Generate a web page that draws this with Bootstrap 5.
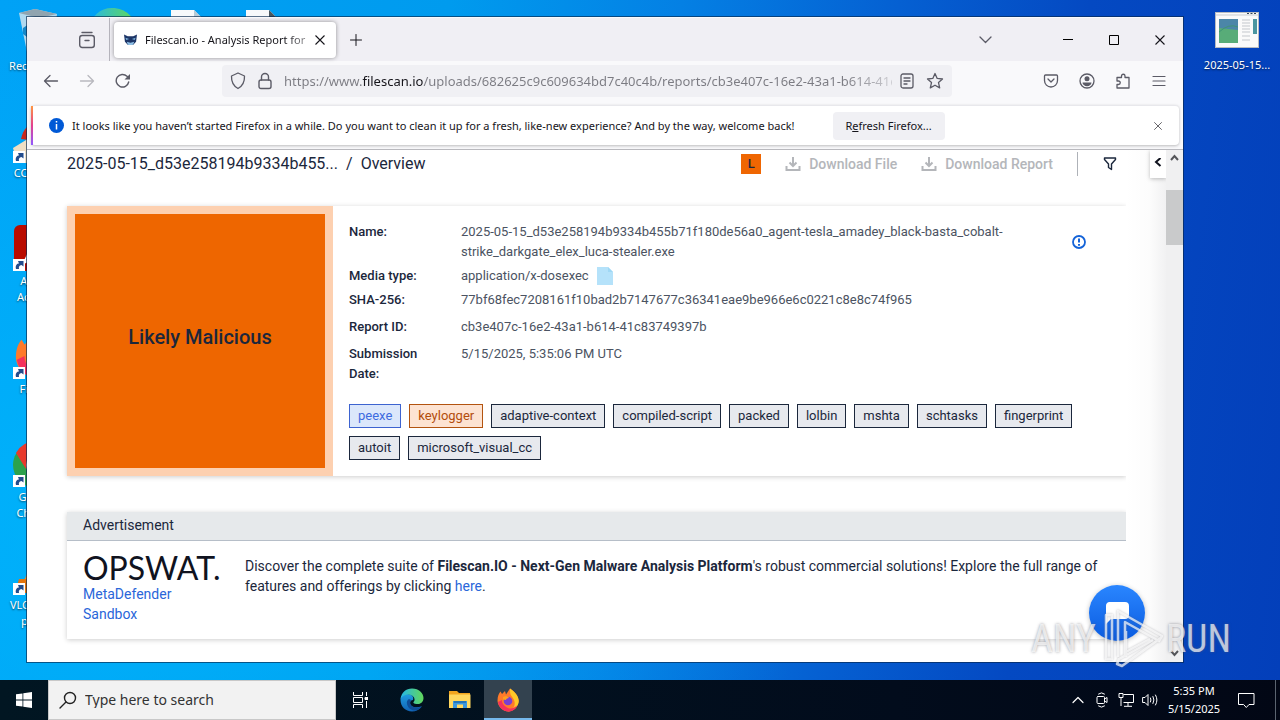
<!DOCTYPE html>
<html lang="en">
<head>
<meta charset="utf-8">
<meta name="viewport" content="width=device-width, initial-scale=1">
<title>Filescan.io - Analysis Report</title>
<link href="https://cdn.jsdelivr.net/npm/bootstrap@5.3.0/dist/css/bootstrap.min.css" rel="stylesheet">
<style>
  :root { --sys: "Noto Sans", "Open Sans", sans-serif; --web: Roboto, "Liberation Sans", sans-serif; }
  body { font-family: var(--sys); font-size: 11px; line-height: 16px; color: #15141a; }
  svg { display: block; flex: none; }
  button { font: inherit; color: inherit; }
  .plain { background: none; border: 0; padding: 0; display: flex; align-items: center; justify-content: center; }
  .ln { fill: none; stroke: currentColor; stroke-linecap: round; stroke-linejoin: round; }

  /* desktop */
  .desk { background:
      radial-gradient(ellipse 700px 500px at 10% 75%, rgba(0,190,255,.6), rgba(0,180,255,0)),
      linear-gradient(97deg, #00a2f6 0%, #009bee 33%, #0480e4 50%, #0560d2 66%, #0449c2 80%, #033fba 100%); }
  .shortcut { position: absolute; width: 76px; text-align: center; color: #fff; line-height: 16px; text-decoration: none; text-shadow: 0 1px 2px rgba(0,0,0,.6); }
  .shortcut svg { margin: 0 auto; }
  .shortcut span { display: block; }

  /* browser window */
  .win { position: absolute; inset: 17px 97px 18px 27px; background: #f9f9fb; box-shadow: 0 0 0 1px rgba(8,38,76,.65); }
  .tabs { height: 44px; background: #f0eff4; border-top: 1px solid #fafafc; }
  .view-btn { width: 44px; margin-left: 38px; color: #5b5b66; }
  .tabs-sep { width: 1px; background: #b5b4bc; }
  .tab-on { width: 222px; height: 36px; margin: 4px 4px 0; padding: 0 10px; background: #fff; border-radius: 4px; box-shadow: 0 0 4px rgba(0,0,0,.4); }
  .tab-name { overflow: hidden; white-space: nowrap; -webkit-mask: linear-gradient(90deg, #000 85%, rgba(0,0,0,.35)); mask: linear-gradient(90deg, #000 85%, rgba(0,0,0,.35)); }
  .add-btn { width: 32px; }
  .list-btn { width: 46px; margin-right: 37px; color: #5b5b66; }
  .wbtn { width: 46px; }
  .bar { height: 40px; color: #5b5b66; padding: 0 6px; }
  .nav-btn { width: 36px; height: 32px; }
  .addr { height: 32px; width: 730px; background: #f0f0f4; border-radius: 4px; padding: 0 4px; }
  .addr input { border: 0; outline: 0; padding: 0; min-width: 0; font-size: 13px; height: 24px; color: #75757c;
     background: linear-gradient(90deg, #7b7b82 0 78px, #15141a 78px 139px, #7b7b82 139px 560px, #d5d5da 612px);
     -webkit-background-clip: text; background-clip: text; -webkit-text-fill-color: transparent; }
  .notice { height: 40px; margin: 4px 4px; background: #fff; border-top: 1px solid #e8e8ec; border-radius: 4px; box-shadow: 0 1px 3px rgba(0,0,0,.25); }
  .notice::before { content: ""; width: 2px; align-self: stretch; background: linear-gradient(#ff9640, #e3408e 50%, #9059ff); }
  .notice .cta { background: #f0f0f4; border: 0; border-radius: 4px; height: 28px; width: 112px; margin-left: 38px; }
  .view { border-top: 1px solid #b9b9be; background: #fff; min-height: 0; font-family: var(--web); color: #1b273c; overflow: hidden; }

  /* report page */
  .report { padding-left: 40px; min-width: 0; }
  .crumbs { height: 28px; margin-bottom: 28px; font-size: 16px; }
  .lvl { width: 20px; height: 20px; background: #ef6602; color: #1b273c; font-size: 13px; font-weight: 500; display: flex; align-items: center; justify-content: center; }
  .dl { color: #b4b6ba; font-size: 14px; font-weight: 500; gap: 8px; }
  .rule { width: 1px; height: 24px; background: #aeb2b8; }
  .panel { background: #fff; box-shadow: 0 1px 5px rgba(0,0,0,.2); }
  .verdict { width: 266px; border: 8px solid #fdd0b0; padding-bottom: 8px; background: #ee6600; font-size: 20px; font-weight: 500; }
  .facts { font-size: 13px; line-height: 20px; color: #4b5362; }
  .facts th { width: 112px; font-weight: 500; color: #1b273c; padding: 0 24px 4px 0; vertical-align: top; }
  .facts td { padding: 0 0 4px; vertical-align: top; }
  .facts .more > * { padding-bottom: 7px; }
  .tag-chip { height: 24px; padding: 0 8px; border: 1px solid #1b273c; background: #e7e9ee; color: #1b273c; font-size: 13px; line-height: 22px; text-decoration: none; }
  .tag-blue { border-color: #3d63d0; background: #dbe7fb; color: #3d6be0; }
  .tag-orange { border-color: #b35410; background: #fde3d2; color: #b34d0c; }
  .ad { margin-top: 36px; font-size: 14px; line-height: 20px; }
  .ad-head { background: #e6e9eb; border-bottom: 1px solid #b6bec8; height: 29px; line-height: 26px; padding: 0 16px; }
  .ad-body { min-height: 97px; padding: 15px 16px; }
  .ad-body a { color: #2a66d9; text-decoration: none; }
  .brand { width: 162px; }
  .brand-name { font: 400 32px/24px Lato, sans-serif; color: #10131f; display: block; }
  .edge { width: 40px; background: linear-gradient(90deg, #fff, #fcfcfc 60%, #f1f1f2); }
  .fold { width: 16px; height: 28px; background: #fff; box-shadow: 0 1px 4px rgba(0,0,0,.25); }
  .scroll { width: 17px; background: #f0f0f1; color: #55565a; }
  .thumb { height: 55px; background: #c9cacb; }
  .chat { position: absolute; right: 38px; bottom: 21px; width: 56px; height: 56px; border-radius: 50%; background: linear-gradient(#2a86ff, #0a5be0); box-shadow: 0 1px 5px rgba(0,0,0,.25); }
  .watermark { position: absolute; right: 49px; bottom: 9px; color: rgba(255,255,255,.7); font: 400 38px/60px "Roboto Condensed", "Liberation Sans Narrow", "DejaVu Sans Condensed", sans-serif; text-shadow: 0 0 3px rgba(90,90,100,.6); pointer-events: none; }
  .watermark svg { filter: drop-shadow(0 0 1px rgba(90,90,100,.5)); }

  /* taskbar */
  .task { height: 40px; background: linear-gradient(90deg, #011622, #020c1c 70%, #020715); color: #fff; }
  .tbtn { width: 48px; height: 40px; }
  .tbtn.on { background: #33424f; box-shadow: inset 0 -2px #76b9ed; }
  .find { width: 288px; height: 40px; background: #f2f2f2; border: 1px solid #c8c8c8; color: #222; padding: 0 10px; }
  .find input { border: 0; outline: 0; background: none; font-size: 14px; min-width: 0; padding: 0; }
  .find input::placeholder { color: #333; opacity: 1; }
  .tray { width: 24px; height: 40px; }
  .clock { width: 64px; line-height: 18px; }
  .bell { margin: 0 16px 0 12px; }
  .peek { width: 5px; border-left: 1px solid #5b6470; height: 40px; }
</style>
</head>
<body class="vh-100 d-flex flex-column overflow-hidden">

<svg class="position-absolute" width="0" height="0" aria-hidden="true">
  <defs>
    <linearGradient id="eg" x1="0" x2="1"><stop stop-color="#25b7e8"/><stop offset="1" stop-color="#62d85a"/></linearGradient>
    <linearGradient id="eb" x1="0" x2="0" y1="0" y2="1"><stop stop-color="#1f9de0"/><stop offset="1" stop-color="#1163b5"/></linearGradient>
  </defs>
  <symbol id="arrow" viewBox="0 0 12 12"><path fill="#fff" d="M0 0h12v12H0z"/><path d="M3 10C2 6.500 4 4.500 6 4.500L5 2h5.500v5.500L8.500 6C6 6.500 5.500 8 6 10z" fill="#234c8c"/></symbol>
  <symbol id="fox" viewBox="0 0 24 24">
    <path d="M1.500 13C1.500 8 3 5 4.500 3.500L6 6l3-3 1 3.500 4-6C18 3 23 8 22.500 14c-1 6-6 9.500-10.500 9.500S2 19 1.500 13z" fill="#ff7a2a"/>
    <path d="M14 .500C19 4 24 9 22.500 15c-2 6-7 8.500-11 8.500 5-1 8-5 7-10-.500-3-3-5-4-7-.600-2-.500-4-.500-6z" fill="#ffc928"/><path d="M2 14c1 6 6 9.500 10 9.500 4 0 8-2 9-6-3 3-7 4-10 2S6 16 6 12z" fill="#f5315c"/><circle cx="12" cy="13" r="4.300" fill="#7a3fd0"/><path d="M7 9c2-1 5-1 6 1-2 0-3 1-3 2l-3-.500z" fill="#ffa01e"/>
  </symbol>
  <symbol id="edge" viewBox="0 0 24 24">
    <path d="M.500 12C.500 8 3 6 7 6c5 0 7 3 6 6-1.500 0-3 1-3 3 0 3 4 5.500 11.500 3.500C19 22 16 23.500 12 23.500 5.500 23.500.500 18.500.500 12z" fill="url(#eb)"/>
    <path d="M9 11c-2 1-2.500 3-2 5 1 4.500 5 7 9 6.500 3-.700 5-2.500 6-4.500-3 2-7 2-9.500.500S9.500 14 11 12z" fill="#0f4d97"/>
    <path d="M.500 11C1.500 4.500 6 .500 12 .500c7 0 11.500 5 11.500 9.500 0 4-3 6.500-7 6-2.500-.300-3.500-1-3-2 1-1 1.500-2.500.500-4.500C12.500 7 9 6 5.500 7 3 8 1 9 .500 11z" fill="url(#eg)"/>
  </symbol>
  <symbol id="save" viewBox="0 0 16 16"><path d="M8 1v8M4.500 6.500L8 10l3.500-3.500M1.500 10v4h13v-4" fill="none" stroke="currentColor" stroke-width="2"/></symbol>
  <symbol id="cross" viewBox="0 0 12 12"><path d="M1.500 1.500l9 9M10.500 1.500l-9 9" fill="none" stroke="currentColor" stroke-width="1.100"/></symbol>
</svg>

<main class="desk flex-grow-1 position-relative overflow-hidden">
  <a href="#" class="shortcut" style="left:0;top:8px"><svg width="42" height="46" viewBox="0 0 42 46"><path d="M2 5l16-4 22 5-5 38H10z" fill="#cfe3ee" opacity=".85"/><path d="M2 5l16-4 22 5-18 4z" fill="#91a4af"/><path d="M6 20l6-4 2 7-4 6-4-3z" fill="#1688c9"/></svg><span class="mt-1">Recycle Bin</span></a>
  <a href="#" class="shortcut" style="left:74px;top:7px" aria-label="Microsoft Edge"><svg width="48" height="48"><use href="#edge"/></svg></a>
  <a href="#" class="shortcut" style="left:148px;top:10px" aria-label="Document"><svg width="34" height="40" viewBox="0 0 34 40"><path d="M2 0h23l7 7v33H2z" fill="#f7f9fb"/><path d="M25 0l7 7h-7z" fill="#b7cad6"/></svg></a>
  <a href="#" class="shortcut" style="left:223px;top:10px" aria-label="Document"><svg width="34" height="40" viewBox="0 0 34 40"><path d="M2 0h23l7 7v33H2z" fill="#f7f9fb"/><path d="M25 0l7 7h-7z" fill="#4a565e"/></svg></a>
  <a href="#" class="shortcut" style="left:-1px;top:117px"><svg width="48" height="48" viewBox="0 0 48 48"><path d="M8 22c2-10 8-16 16-18v20z" fill="#c9281c"/><path d="M0 31l18-11 12 8v18H4z" fill="#f0dfc4"/><use href="#arrow" y="34" width="12" height="12"/></svg><span>CCleaner</span></a>
  <a href="#" class="shortcut" style="left:-1px;top:225px"><svg width="48" height="48" viewBox="0 0 48 48"><rect x="1" width="46" height="46" rx="6" fill="#b90b00"/><path d="M11 38c4-10 10-18 12-27 2 10 8 16 16 20-10-2-18 1-28 7z" fill="none" stroke="#fff" stroke-width="2"/><use href="#arrow" y="34" width="12" height="12"/></svg><span>Adobe<br>Acrobat</span></a>
  <a href="#" class="shortcut" style="left:-1px;top:333px"><svg width="48" height="48" viewBox="0 0 48 48"><use href="#fox" width="46" height="46"/><use href="#arrow" y="34" width="12" height="12"/></svg><span>Firefox</span></a>
  <a href="#" class="shortcut" style="left:-1px;top:441px"><svg width="48" height="48" viewBox="0 0 48 48"><circle cx="23" cy="24" r="23" fill="#2ba24c"/><path d="M3 12a23 23 0 0 1 40 0H23L13 28z" fill="#e8392d"/><circle cx="23" cy="24" r="10" fill="#fff"/><circle cx="23" cy="24" r="8" fill="#3c79e6"/><use href="#arrow" y="34" width="12" height="12"/></svg><span>Google<br>Chrome</span></a>
  <a href="#" class="shortcut" style="left:-1px;top:549px"><svg width="48" height="48" viewBox="0 0 48 48"><path d="M24 2L10 34h28z" fill="#f58a1f"/><path d="M6 30h36l4 14H2z" fill="#e5750d"/><use href="#arrow" y="34" width="12" height="12"/></svg><span>VLC media<br>player</span></a>
  <a href="#" class="shortcut" style="right:5px;top:12px"><svg width="44" height="37" viewBox="0 0 44 37"><rect x=".500" y=".500" width="43" height="35" fill="#fafafa" stroke="#b9bcc0"/><path d="M1 3h42" stroke="#c9ccd0"/><rect x="4" y="7" width="19" height="24" fill="#4b86a8"/><path d="M4 16l19 2v13H4z" fill="#58ac78"/><path d="M4 20q10-9 19-5" stroke="#3f9474" fill="none"/><path d="M27 8h8M27 11h8M27 14h8M27 17h8M27 20h8M27 24h8M27 28h8" stroke="#c3c7cc"/><rect x="38" y="7" width="4" height="15" fill="#4b96a0"/><path d="M32 1.500h9" stroke="#345" stroke-dasharray="2 1.500"/></svg><span class="mt-2">2025-05-15...</span></a>

  <section class="win d-flex flex-column">
    <div class="tabs d-flex flex-shrink-0">
      <button class="plain view-btn" aria-label="View tabs"><svg width="18" height="18" viewBox="0 0 18 18" class="ln" stroke-width="1.400"><path d="M4 1.500h10"/><rect x="1.700" y="4.500" width="14.600" height="12" rx="2.500"/><path d="M7 9.500h4"/></svg></button>
      <i class="tabs-sep"></i>
      <div class="tab-on d-flex align-items-center">
        <svg width="13" height="14" viewBox="0 0 14 14"><path d="M0 1l4 2h6l4-2-1 8-3 3H4L1 9z" fill="#1c3567"/><path d="M1.500 4.500l4 1.500-3 1zM12.500 4.500l-4 1.500 3 1z" fill="#7fb4dd"/><path d="M3 9l4 1 4-1-1 2.500-1 1H5l-1-1z" fill="#8fc0e6"/></svg>
        <span class="tab-name flex-grow-1 ms-2 me-1">Filescan.io - Analysis Report for</span>
        <button class="plain" aria-label="Close tab"><svg width="12" height="12"><use href="#cross"/></svg></button>
      </div>
      <button class="plain add-btn" aria-label="New tab"><svg width="12" height="12" viewBox="0 0 12 12" class="ln" stroke="#5b5b66"><path d="M6 .500v11M.500 6h11"/></svg></button>
      <button class="plain ms-auto list-btn" aria-label="List all tabs"><svg width="13" height="8" viewBox="0 0 13 8" class="ln" stroke-width="1.300"><path d="M1 1l5.500 5.500L12 1"/></svg></button>
      <button class="plain wbtn" aria-label="Minimize"><svg width="10" height="10"><path d="M0 4.500h10" stroke="#000"/></svg></button>
      <button class="plain wbtn" aria-label="Maximize"><svg width="10" height="10"><path d="M.500.500h9v9h-9z" fill="none" stroke="#000"/></svg></button>
      <button class="plain wbtn" aria-label="Close"><svg width="12" height="12"><use href="#cross"/></svg></button>
    </div>

    <div class="bar d-flex align-items-center flex-shrink-0">
      <button class="plain nav-btn" aria-label="Back"><svg width="16" height="16" viewBox="0 0 16 16" class="ln" stroke-width="1.300"><path d="M14.500 8H1.500M7 2.500L1.500 8 7 13.500"/></svg></button>
      <button class="plain nav-btn" aria-label="Forward"><svg width="16" height="16" viewBox="0 0 16 16" class="ln" stroke-width="1.300" opacity=".4"><path d="M1.500 8h13M9 2.500L14.500 8 9 13.500"/></svg></button>
      <button class="plain nav-btn" aria-label="Reload"><svg width="16" height="16" viewBox="0 0 16 16"><path d="M13.700 9A6.300 6.300 0 1 1 12 3.300L13.500 5" class="ln" stroke-width="1.400"/><path d="M15 1v5.500H9.500z" fill="currentColor"/></svg></button>
      <div class="addr d-flex align-items-center mx-auto">
        <button class="plain px-1" aria-label="Tracking protection"><svg width="16" height="18" viewBox="0 0 16 18" class="ln" stroke-width="1.300"><path d="M8 1l6.500 3c.200 5-1 9.500-6.500 12.500C2.500 13.500 1.300 9 1.500 4z"/></svg></button>
        <button class="plain px-2" aria-label="Site security"><svg width="14" height="18" viewBox="0 0 14 18" class="ln" stroke-width="1.400"><rect x="1" y="8" width="12" height="8.500" rx="2"/><path d="M3.500 8V5a3.500 3.500 0 0 1 7 0v3"/></svg></button>
        <input class="flex-grow-1 ms-1" aria-label="Address" value="https://www.filescan.io/uploads/682625c9c609634bd7c40c4b/reports/cb3e407c-16e2-43a1-b614-41c83749397b">
        <button class="plain px-2" aria-label="Reader view"><svg width="14" height="16" viewBox="0 0 14 16" class="ln" stroke-width="1.300"><rect x="1" y="1" width="12" height="14" rx="2"/><path d="M4 5h6M4 8h6M4 11h3"/></svg></button>
        <button class="plain px-1" aria-label="Bookmark"><svg width="18" height="18" viewBox="0 0 18 18" class="ln" stroke-width="1.300"><path d="M9 1.500l2.200 4.900 5.300.600-4 3.600 1.200 5.300L9 13.200l-4.700 2.700 1.200-5.300-4-3.600 5.300-.600z"/></svg></button>
      </div>
      <button class="plain nav-btn" aria-label="Pocket"><svg width="16" height="16" viewBox="0 0 16 16" class="ln" stroke-width="1.300"><path d="M2.500 2h11c.600 0 1 .400 1 1v4.500a6.500 6.500 0 0 1-13 0V3c0-.600.400-1 1-1zM5 6l3 3 3-3"/></svg></button>
      <button class="plain nav-btn" aria-label="Account"><svg width="16" height="16" viewBox="0 0 16 16"><circle cx="8" cy="8" r="7" class="ln" stroke-width="1.300"/><circle cx="8" cy="5.800" r="2.500" fill="currentColor"/><path d="M3.500 9.500h9c0 2-2 3.700-4.500 3.700s-4.500-1.700-4.500-3.700z" fill="currentColor"/></svg></button>
      <button class="plain nav-btn" aria-label="Extensions"><svg width="16" height="16" viewBox="0 0 16 16" class="ln" stroke-width="1.300"><path d="M2 15V11.500h1.500a1.700 1.700 0 0 0 0-3.500H2V4.500h4.500V3a1.700 1.700 0 0 1 3.500 0v1.500h4V15z"/></svg></button>
      <button class="plain nav-btn" aria-label="Menu"><svg width="14" height="12" viewBox="0 0 14 12" class="ln" stroke-width="1.200"><path d="M1 1.500h12M1 6h12M1 10.500h12"/></svg></button>
    </div>

    <div class="notice d-flex align-items-center flex-shrink-0">
      <svg class="ms-3 me-2" width="15" height="15" viewBox="0 0 15 15"><circle cx="7.500" cy="7.500" r="7.500" fill="#0059d6"/><path d="M7.500 3v1.500M7.500 6v5.500" stroke="#fff" stroke-width="1.500"/></svg>
      <span class="text-nowrap">It looks like you haven’t started Firefox in a while. Do you want to clean it up for a fresh, like-new experience? And by the way, welcome back!</span>
      <button class="cta text-nowrap">R<u>e</u>fresh Firefox...</button>
      <button class="plain ms-auto me-3" aria-label="Dismiss"><svg width="10" height="10"><use href="#cross" opacity=".7"/></svg></button>
    </div>

    <div class="view flex-grow-1 d-flex">
      <div class="report flex-grow-1">
        <div class="crumbs d-flex align-items-center">
          <span>2025-05-15_d53e258194b9334b455...</span><span class="mx-2">/</span><span>Overview</span>
          <span class="lvl ms-auto me-4">L</span>
          <button class="plain dl me-4" disabled><svg width="16" height="16"><use href="#save"/></svg>Download File</button>
          <button class="plain dl me-4" disabled><svg width="16" height="16"><use href="#save"/></svg>Download Report</button>
          <i class="rule"></i>
          <button class="plain ms-4 me-2" aria-label="Filter"><svg width="16" height="16" viewBox="0 0 16 16" class="ln" stroke-width="1.400"><path d="M2.500 2h11v1.500L9.500 8v5.500l-3-2V8l-4-4.500z"/></svg></button>
        </div>
        <div class="panel d-flex">
          <div class="verdict d-flex align-items-center justify-content-center flex-shrink-0">Likely Malicious</div>
          <div class="flex-grow-1 p-3">
            <div class="d-flex">
              <table class="facts flex-grow-1">
                <tr><th scope="row">Name:</th><td>2025-05-15_d53e258194b9334b455b71f180de56a0_agent-tesla_amadey_black-basta_cobalt-strike_darkgate_elex_luca-stealer.exe</td></tr>
                <tr><th scope="row">Media type:</th><td><span class="d-flex">application/x-dosexec<svg class="ms-2" width="16" height="20" viewBox="0 0 16 20"><path d="M0 1h11l5 5v13H0z" fill="#b5e2fa"/><path d="M11 1l5 5h-5z" fill="#9fd8f5"/></svg></span></td></tr>
                <tr class="more"><th scope="row">SHA-256:</th><td>77bf68fec7208161f10bad2b7147677c36341eae9be966e6c0221c8e8c74f965</td></tr>
                <tr class="more"><th scope="row">Report ID:</th><td>cb3e407c-16e2-43a1-b614-41c83749397b</td></tr>
                <tr><th scope="row">Submission Date:</th><td>5/15/2025, 5:35:06 PM UTC</td></tr>
              </table>
              <button class="plain align-self-start mt-2 pt-1 me-4 ms-4" aria-label="Details"><svg width="14" height="16" viewBox="0 0 14 16"><circle cx="7" cy="8" r="6" fill="none" stroke="#1463d8" stroke-width="1.800"/><path d="M7 4.500v4M7 10v1.700" stroke="#1463d8" stroke-width="2"/></svg></button>
            </div>
            <div class="d-flex flex-wrap gap-2 mt-3">
              <a href="#" class="tag-chip tag-blue">peexe</a><a href="#" class="tag-chip tag-orange">keylogger</a><a href="#" class="tag-chip">adaptive-context</a><a href="#" class="tag-chip">compiled-script</a><a href="#" class="tag-chip">packed</a><a href="#" class="tag-chip">lolbin</a><a href="#" class="tag-chip">mshta</a><a href="#" class="tag-chip">schtasks</a><a href="#" class="tag-chip">fingerprint</a><a href="#" class="tag-chip">autoit</a><a href="#" class="tag-chip">microsoft_visual_cc</a>
            </div>
          </div>
        </div>
        <div class="panel ad">
          <div class="ad-head">Advertisement</div>
          <div class="ad-body d-flex">
            <div class="brand flex-shrink-0"><span class="brand-name mb-1">OPSWAT.</span><a href="#">MetaDefender<br>Sandbox</a></div>
            <p class="mb-0">Discover the complete suite of <strong>Filescan.IO - Next-Gen Malware Analysis Platform</strong>'s robust commercial solutions! Explore the full range of features and offerings by clicking <a href="#">here</a>.</p>
          </div>
        </div>
      </div>
      <div class="edge flex-shrink-0 d-flex justify-content-end"><button class="plain fold" aria-label="Expand panel"><svg width="8" height="12" viewBox="0 0 8 12"><path d="M6.500 0L2 4l4.500 4" fill="none" stroke="#10131f" stroke-width="2"/></svg></button></div>
      <div class="scroll flex-shrink-0 d-flex flex-column">
        <svg class="mx-auto mt-1 mb-4" width="9" height="12" viewBox="0 0 9 12"><path d="M1 6l3.500-4L8 6" fill="none" stroke="currentColor" stroke-width="2"/></svg>
        <i class="thumb"></i>
        <svg class="mx-auto mt-auto mb-1" width="9" height="9" viewBox="0 0 9 9"><path d="M1 2l3.500 4L8 2" fill="none" stroke="currentColor" stroke-width="2"/></svg>
      </div>
    </div>
    <button class="plain chat" aria-label="Open chat"><svg width="26" height="26" viewBox="0 0 26 26"><path d="M5 2h16a4 4 0 0 1 4 4v9a4 4 0 0 1-4 4H7l-5 5V6a4 4 0 0 1 3-4z" fill="#fff"/></svg></button>
  </section>

  <div class="watermark d-flex align-items-center">ANY<svg width="70" height="64" viewBox="0 0 70 64" fill="none" stroke="#fff" stroke-opacity=".7" stroke-width="2.500" stroke-linejoin="round"><path d="M10 8h6v44h-6zM22 50V4l44 25-3 5-34-19v35M30 24v26M66 30L26 59l-5-2 2-5 34-19M30 45l24-13"/></svg>RUN</div>
</main>

<footer class="task d-flex align-items-center flex-shrink-0">
  <button class="plain tbtn" aria-label="Start"><svg width="16" height="16" viewBox="0 0 16 16" fill="#fff"><path d="M0 2.300L6.500 1.400v6.200H0zM7.300 1.300L16 0v7.600H7.300zM0 8.400h6.500v6.200L0 13.700zM7.300 8.400H16V16l-8.700-1.300z"/></svg></button>
  <label class="find d-flex align-items-center"><svg width="18" height="18" viewBox="0 0 18 18" class="ln" stroke-width="1.400"><circle cx="11" cy="7" r="5.500"/><path d="M7 11l-6 6"/></svg><input class="ms-2 ps-0 flex-grow-1" type="text" placeholder="Type here to search" aria-label="Type here to search"></label>
  <button class="plain tbtn" aria-label="Task view"><svg width="16" height="16" viewBox="0 0 16 16" fill="none" stroke="#fff"><path d="M1.500 0v3.500h9V0M1.500 16v-3.500h9V16M1.500 5.500h9v5h-9zM14.500 0v4M14.500 9v7"/><path d="M13 5.500h3v2h-3z" fill="#fff"/></svg></button>
  <button class="plain tbtn ms-1" aria-label="Edge"><svg width="24" height="24"><use href="#edge"/></svg></button>
  <button class="plain tbtn" aria-label="File Explorer"><svg width="22" height="20" viewBox="0 0 22 20"><path d="M0 1h8l2 2h11v4H0z" fill="#f2a51e"/><path d="M0 4.500h21.500V18H0z" fill="#ffd75e"/><path d="M4 18v-7h14v7h-4v-3.500H8V18z" fill="#3a96dd"/><path d="M5 11h12v2H5z" fill="#2374b8"/></svg></button>
  <button class="plain tbtn on" aria-label="Firefox"><svg width="24" height="24"><use href="#fox"/></svg></button>
  <button class="plain tray ms-auto" aria-label="Hidden icons"><svg width="12" height="8" viewBox="0 0 12 8" class="ln" stroke-width="1.200"><path d="M1 6.500l5-5 5 5"/></svg></button>
  <button class="plain tray" aria-label="Meet now"><svg width="12" height="16" viewBox="0 0 12 16" class="ln"><rect x="1" y="4.500" width="7.500" height="7" rx="1"/><path d="M8.500 7l2.500-1.500v5L8.500 9M2.500 2Q5.500-.500 8.500 2M2.500 14q3 2.500 6 0"/></svg></button>
  <button class="plain tray" aria-label="Network"><svg width="16" height="14" viewBox="0 0 16 14" fill="none" stroke="#fff"><path d="M5.500 1.500h10v8h-10M1 .500h4v4H1zM3 4.500v8.500M10 9.500V13M6 13.300h8"/></svg></button>
  <button class="plain tray" aria-label="Volume"><svg width="17" height="14" viewBox="0 0 17 14" class="ln"><path d="M1 4.500h2L6 1.500v11l-3-3H1zM8.500 5q1 2 0 4M11 3.500q2 3.500 0 7M13.500 2q3 5 0 10"/></svg></button>
  <div class="clock text-center">5:35 PM<br>5/15/2025</div>
  <button class="plain bell" aria-label="Notifications"><svg width="17" height="17" viewBox="0 0 17 17" fill="none" stroke="#fff"><path d="M.500 1.500h15.500v11h-5l-2.700 3-2.700-3H.500z"/></svg></button>
  <i class="peek ms-1"></i>
</footer>
<script src="https://cdn.jsdelivr.net/npm/bootstrap@5.3.0/dist/js/bootstrap.bundle.min.js"></script>
</body>
</html>
